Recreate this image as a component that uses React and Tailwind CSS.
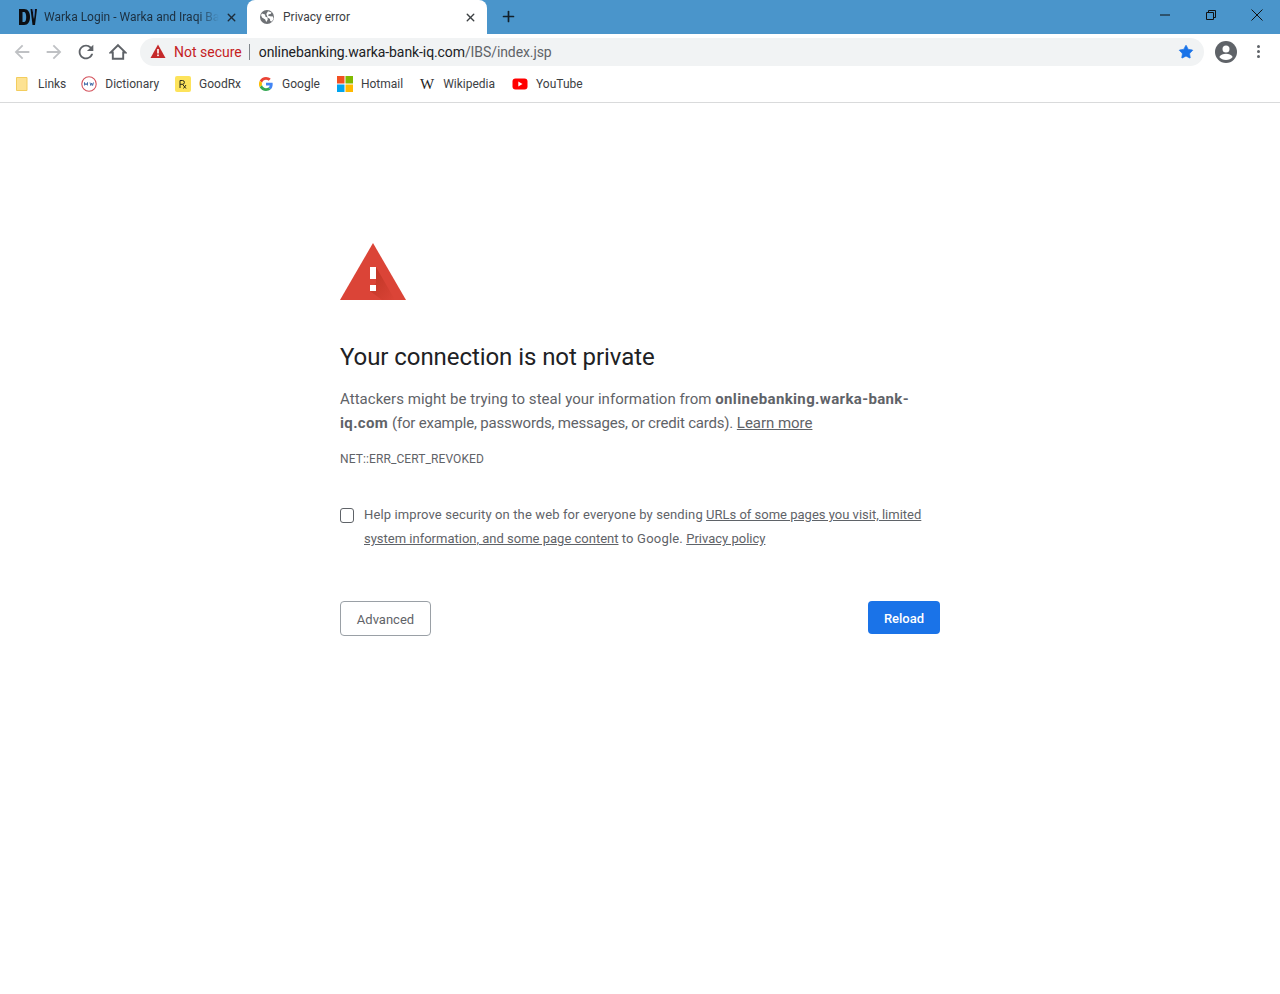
import React from "react";
import { X, Plus, Star } from "lucide-react";

const Bookmark = ({ icon, label, cls }) => (
  <div className={`flex items-center ${cls}`}>
    <span className="w-4 h-4 flex items-center justify-center shrink-0">{icon}</span>
    <span className="text-[12px] text-[#3c4043] ml-[8px] whitespace-nowrap">{label}</span>
  </div>
);

const Globe = () => (
  <svg width="16" height="16" viewBox="0 0 16 16"><circle cx="8" cy="8" r="7" fill="#6e7175"/><path d="M3 4.500l3 1 .5 2.200 2 .8.2 2.200-1.500 2.300-1-2.500L3 8.500 2 6zM9 2.200l3.600 1.200-1 1.600-1.800.2-.8 1.400 2 .6 3 .2.5 2.500-1.700 2.600-1.600-.4-.2-2.200-2.400-1.300L7.300 5z" fill="#fff"/></svg>
);

export default function App() {
  return (
    <div className="min-h-[994px] bg-white flex flex-col font-['Roboto','Noto_Sans',sans-serif]">
      <div className="h-[34px] bg-[#4a95cb] flex items-end relative">
        <div className="w-[247px] h-[34px] flex items-center pl-[19px] pr-[9px]">
          <svg width="18" height="18" viewBox="0 0 18 18" className="shrink-0">
            <path d="M0 1h5c4 0 6 3.500 6 8s-2 8-6 8H0zM3.500 4v10h1.500c1.500 0 2.200-2 2.200-5s-.7-5-2.200-5z" fill="#0c0f14"/>
            <path d="M11.500 1h2l1.500 10L16 1h2l-2 16h-2.500z" fill="#0c0f14"/>
            <path d="M13.500 1h2.500l-1 10z" fill="#3f78bb"/>
          </svg>
          <span className="ml-[7px] text-[12px] text-[#1c2f3f] w-[175px] overflow-hidden whitespace-nowrap [mask-image:linear-gradient(to_right,black_88%,transparent_100%)]">Warka Login - Warka and Iraqi Ba</span>
          <X size={13} strokeWidth={2.6} className="text-[#1d2b38] ml-auto" />
        </div>
        <div className="w-[240px] h-[34px] bg-white rounded-t-[8px] flex items-center pl-[12px] pr-[10px]">
          <Globe />
          <span className="ml-[8px] text-[12px] text-[#3c4043] whitespace-nowrap">Privacy error</span>
          <X size={13} strokeWidth={2.6} className="text-[#3c4043] ml-auto" />
        </div>
        <Plus size={17} strokeWidth={2.4} className="text-[#12202b] ml-[13px] mb-[9px]" />
        <div className="ml-auto flex items-center h-[34px] pr-[17px] self-start">
          <svg width="12" height="12" viewBox="0 0 12 12" className="-mt-[5px]"><path d="M1 6h10" stroke="#111" strokeWidth="1"/></svg>
          <svg width="12" height="12" viewBox="0 0 12 12" className="ml-[34px] -mt-[5px]"><path d="M1.500 3.500h7v7h-7zM3.500 3.500v-2h7v7h-2" fill="none" stroke="#111"/></svg>
          <svg width="12" height="12" viewBox="0 0 12 12" className="ml-[34px] -mt-[5px]"><path d="M.5.5l11 11M11.500.5l-11 11" stroke="#111"/></svg>
        </div>
      </div>
      <div className="h-[35px] flex items-center">
        <svg width="22" height="22" viewBox="0 0 24 24" className="ml-[11px]"><path d="M20 11H7.830l5.590-5.590L12 4l-8 8 8 8 1.410-1.410L7.830 13H20v-2z" fill="#bfc1c4"/></svg>
        <svg width="22" height="22" viewBox="0 0 24 24" className="ml-[10px]"><path d="M4 11h12.170l-5.590-5.590L12 4l8 8-8 8-1.410-1.410L16.170 13H4v-2z" fill="#bfc1c4"/></svg>
        <svg width="22" height="22" viewBox="0 0 24 24" className="ml-[10px]"><path d="M17.650 6.350A7.958 7.958 0 0 0 12 4c-4.420 0-7.990 3.580-7.990 8s3.570 8 7.990 8c3.730 0 6.840-2.550 7.730-6h-2.080A5.990 5.990 0 0 1 12 18c-3.310 0-6-2.690-6-6s2.690-6 6-6c1.660 0 3.140.69 4.220 1.780L13 11h7V4l-2.350 2.350z" fill="#5f6368"/></svg>
        <svg width="18" height="18" viewBox="0 0 18 18" className="ml-[12px]"><path d="M9 2.200L16.500 9.500h-2.300v6.300H3.800V9.500H1.500z" fill="none" stroke="#5f6368" strokeWidth="1.900" strokeLinejoin="miter"/></svg>
        <div className="ml-[13px] w-[1064px] h-[28px] rounded-full bg-[#f1f3f4] flex items-center pl-[10px] pr-[10px]">
          <svg width="16" height="15" viewBox="0 0 16 15"><path d="M8 .5L15.500 14H.5z" fill="#c5292a"/><rect x="7.200" y="5" width="1.600" height="4.500" fill="#fff"/><rect x="7.200" y="10.500" width="1.600" height="1.600" fill="#fff"/></svg>
          <span className="ml-[8px] pt-[2px] text-[14px] text-[#c5221f] whitespace-nowrap">Not secure</span>
          <span className="ml-[7px] w-px h-[16px] bg-[#80868b]" />
          <span className="ml-[9px] pt-[2px] text-[14px] tracking-[-0.09px] text-[#202124] whitespace-nowrap">onlinebanking.warka-bank-iq.com<span className="text-[#5f6368]">/IBS/index.jsp</span></span>
          <Star size={16} fill="#1a73e8" strokeWidth={1} className="text-[#1a73e8] ml-auto" />
        </div>
        <svg width="22" height="22" viewBox="0 0 22 22" className="ml-[11px]"><circle cx="11" cy="11" r="11" fill="#5f6368"/><circle cx="11" cy="8" r="3.500" fill="#fff"/><path d="M4.300 16c1.200-2.400 4-3.300 6.700-3.300s5.500.9 6.700 3.300c-1.500 2-4 3-6.700 3s-5.200-1-6.700-3z" fill="#fff"/></svg>
        <div className="ml-[20px] flex flex-col gap-[2px]">
          <span className="w-[3px] h-[3px] rounded-full bg-[#5f6368]" />
          <span className="w-[3px] h-[3px] rounded-full bg-[#5f6368]" />
          <span className="w-[3px] h-[3px] rounded-full bg-[#5f6368]" />
        </div>
      </div>
      <div className="h-[34px] pb-[3px] border-b border-[#d9dadb] flex items-center pl-[14px]">
        <Bookmark label="Links" icon={<svg width="16" height="16" viewBox="0 0 16 16"><path d="M2.500 1.500h10.500v13H2.500z" fill="#fde293" stroke="#f3cd5e"/></svg>} />
        <Bookmark cls="ml-[15px]" label="Dictionary" icon={<svg width="16" height="16" viewBox="0 0 16 16"><circle cx="8" cy="8" r="7.200" fill="#fff" stroke="#d4525c" strokeWidth="1.100"/><path d="M3.500 6.500v3M3.500 6.500L5 9M6.500 6.500v3M6.500 6.500L5 9M9 6.500l.8 3 .9-2.400.9 2.400.9-3" fill="none" stroke="#26569a" strokeWidth=".8"/></svg>} />
        <Bookmark cls="ml-[16px]" label="GoodRx" icon={<svg width="16" height="16" viewBox="0 0 16 16"><rect width="16" height="16" rx="2" fill="#fde35b"/><path d="M5 12V4.500h2.500a1.800 1.800 0 010 3.800H5M7.500 8.300L11 12.500M11 9l-2.500 3.500" fill="none" stroke="#2a2a1a" strokeWidth="1"/></svg>} />
        <Bookmark cls="ml-[17px]" label="Google" icon={<svg width="14" height="14" viewBox="0 0 48 48"><path fill="#EA4335" d="M24 9.500c3.500 0 6.700 1.200 9.200 3.600l6.900-6.900C35.900 2.400 30.500 0 24 0 14.600 0 6.500 5.400 2.600 13.200l8 6.200C12.400 13.700 17.700 9.500 24 9.500z"/><path fill="#4285F4" d="M46.900 24.500c0-1.600-.1-3.100-.4-4.500H24v9h12.900c-.6 3-2.200 5.500-4.700 7.200l7.700 6c4.500-4.200 7-10.300 7-17.700z"/><path fill="#FBBC05" d="M10.500 28.600a14.500 14.500 0 010-9.200l-8-6.200a24 24 0 000 21.600z"/><path fill="#34A853" d="M24 48c6.500 0 11.900-2.100 15.900-5.800l-7.700-6c-2.200 1.400-4.900 2.300-8.200 2.300-6.300 0-11.600-4.200-13.500-9.900l-8 6.200C6.500 42.600 14.600 48 24 48z"/></svg>} />
        <Bookmark cls="ml-[17px]" label="Hotmail" icon={<svg width="16" height="16" viewBox="0 0 16 16"><rect width="7.500" height="7.500" fill="#f25022"/><rect x="8.500" width="7.500" height="7.500" fill="#7fba00"/><rect y="8.500" width="7.500" height="7.500" fill="#00a4ef"/><rect x="8.500" y="8.500" width="7.500" height="7.500" fill="#ffb900"/></svg>} />
        <Bookmark cls="ml-[16px]" label="Wikipedia" icon={<span className="text-[15px] text-[#222] font-['Liberation_Serif',serif] leading-none">W</span>} />
        <Bookmark cls="ml-[17px]" label="YouTube" icon={<svg width="16" height="12" viewBox="0 0 16 12"><rect width="15" height="11" x=".5" y=".5" rx="3" fill="#f00"/><path d="M6.300 3.500l4.200 2.500-4.200 2.500z" fill="#fff"/></svg>} />
      </div>
      <main className="w-[600px] ml-[340px] pt-[140px] text-[#5f6368]">
        <svg width="66" height="58" viewBox="0 0 66 58" className="block">
          <defs>
            <linearGradient id="warnShadow" x1="0" y1="0" x2="1" y2="1">
              <stop offset="0" stopColor="#a52714" stopOpacity=".55" />
              <stop offset="1" stopColor="#a52714" stopOpacity="0" />
            </linearGradient>
          </defs>
          <path d="M33 0L66 57H0z" fill="#db4437"/>
          <path d="M36 24l19 33H42L30 48l6-8z" fill="url(#warnShadow)"/>
          <rect x="30" y="24" width="6" height="12" fill="#fff"/>
          <rect x="30" y="42" width="6" height="6" fill="#fff"/>
        </svg>
        <h1 className="mt-[39px] text-[24px] leading-[34px] font-normal tracking-[-0.07px] text-[#202124]">Your connection is not private</h1>
        <p className="mt-[13px] text-[15px] leading-[24px]"><span className="tracking-[0.03px]">Attackers might be trying to steal your information from</span> <strong className="font-bold tracking-[0.36px]">onlinebanking.warka-bank-iq.com</strong> <span className="tracking-[-0.2px]">(for example, passwords, messages, or credit cards).</span> <a className="underline tracking-[-0.03px]">Learn more</a></p>
        <div className="mt-[15px] text-[12px] leading-[18px] uppercase tracking-[0.1px]">NET::ERR_CERT_REVOKED</div>
        <div className="mt-[35px] flex items-start">
          <span className="mt-[5px] w-[14px] h-[15px] border border-[#5f6368] rounded-[3px] shrink-0" />
          <p className="ml-[10px] text-[13px] leading-[24px]"><span className="tracking-[0.12px]">Help improve security on the web for everyone by sending</span> <a className="underline">URLs of some pages you visit, limited system information, and some page content</a> <span className="tracking-[0.2px]">to Google.</span> <a className="underline">Privacy policy</a></p>
        </div>
        <div className="mt-[50px] flex justify-between items-start">
          <button className="w-[91px] h-[35px] pt-[2px] rounded-[4px] border border-[#9aa0a6] bg-white text-[13px] text-[#5f6368]">Advanced</button>
          <button className="w-[72px] h-[33px] pt-[2px] rounded-[4px] bg-[#1a73e8] text-[13px] font-medium text-white">Reload</button>
        </div>
      </main>
    </div>
  );
}
